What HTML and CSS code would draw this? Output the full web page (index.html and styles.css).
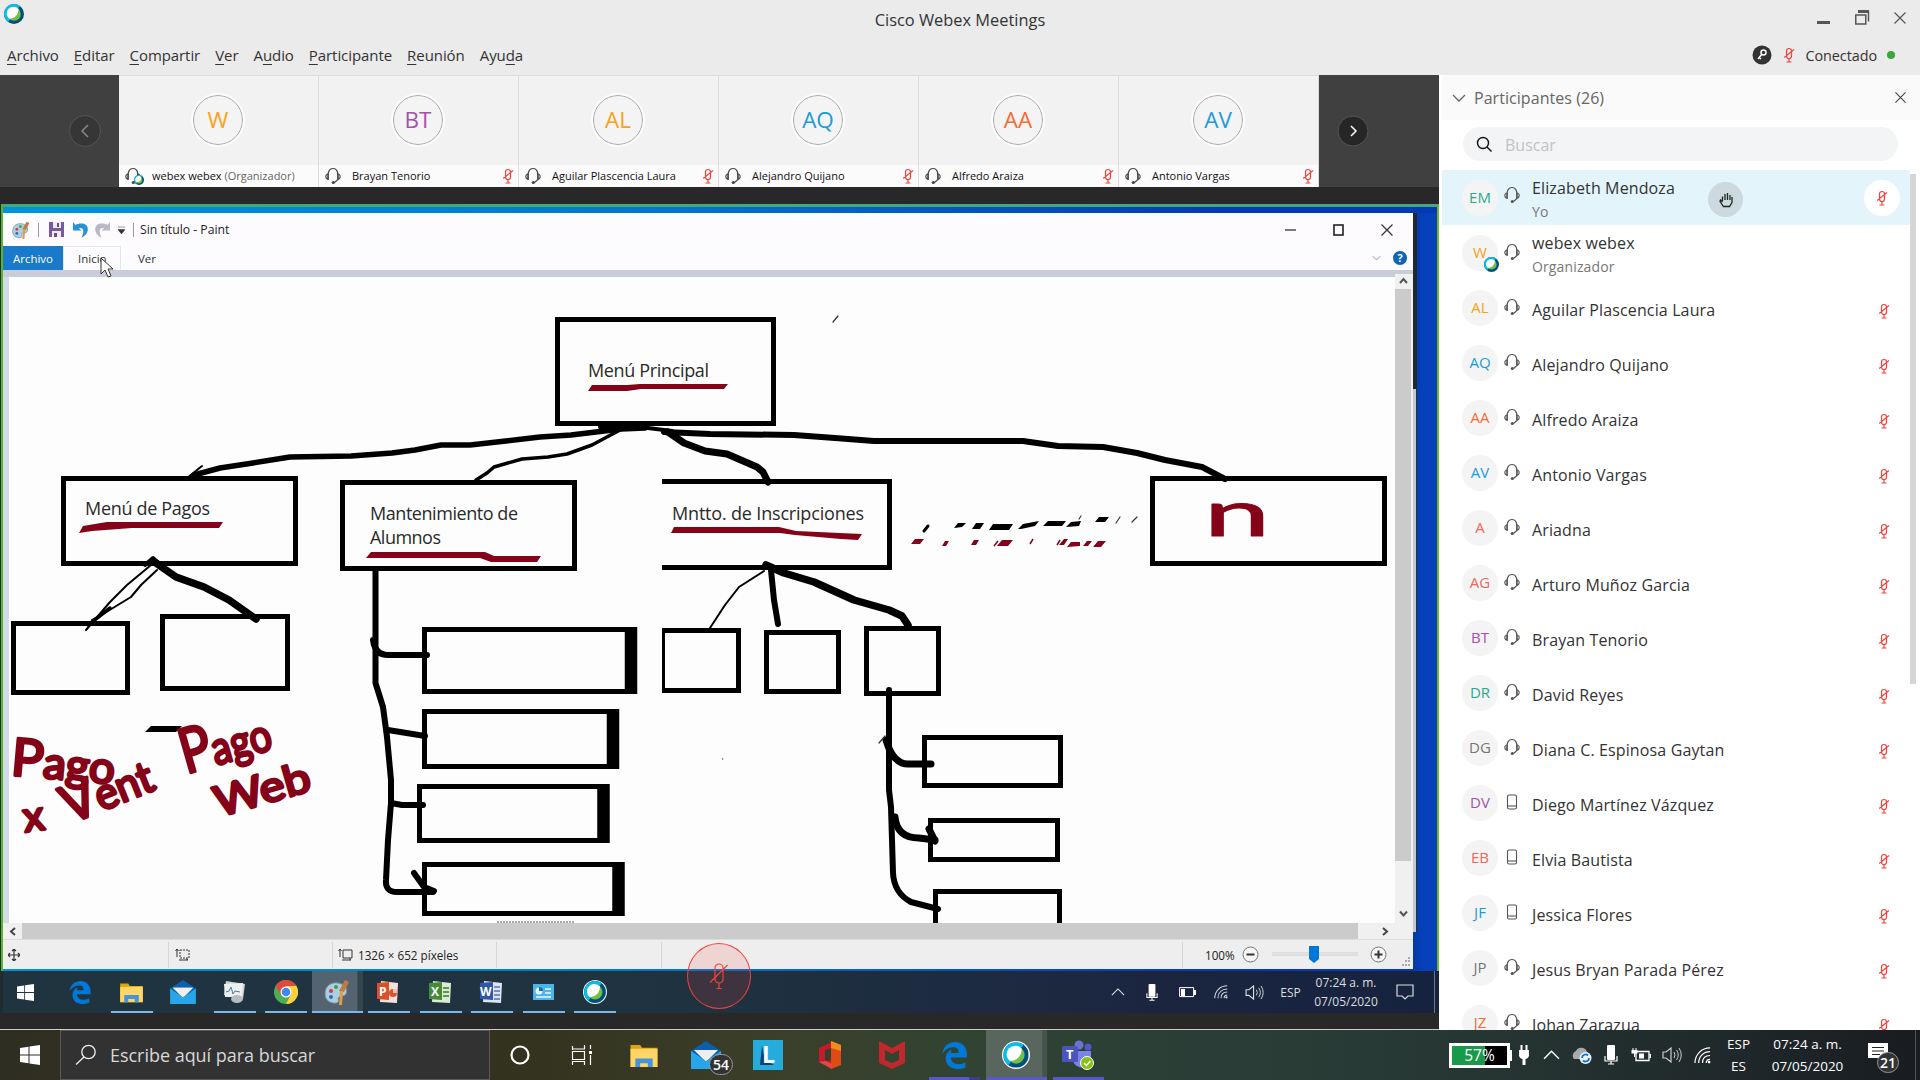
FILE: index.html
```html
<!DOCTYPE html>
<html lang="es">
<head>
<meta charset="utf-8">
<title>Cisco Webex Meetings</title>
<link rel="stylesheet" href="styles.css">
</head>
<body>
<svg class="defs" aria-hidden="true">
  <defs>
    <symbol id="headset" viewBox="0 0 16 18"><path d="M3 12.5C2.500 5 4 1.500 8 1.500S13.500 5 13 12.500L9.500 15.500" fill="none" stroke="currentColor" stroke-width="1.200"/><path d="M3.300 7C0 7.200 0 12 3.300 12.300ZM12.700 7c3.300.2 3.300 5 0 5.300Z" fill="none" stroke="currentColor" stroke-width="1.100"/><circle cx="8.300" cy="15.500" r="1.600" fill="currentColor"/></symbol>
    <symbol id="mute" viewBox="0 0 12 16"><path d="M3.500 4a2.500 2.500 0 0 1 5 0v5a2.500 2.500 0 0 1-5 0ZM1.200 10.500 11 2.500M6 12v3M3.500 15h5" fill="none" stroke="currentColor" stroke-width="1.200"/></symbol>
    <symbol id="phone" viewBox="0 0 12 16"><rect x="1.500" y="1" width="9" height="14" rx="1.500" fill="none" stroke="currentColor" stroke-width="1.100"/><path d="M2 12h8" stroke="currentColor" stroke-width="1.100"/></symbol>
    <symbol id="webex" viewBox="0 0 20 20"><circle cx="10" cy="10" r="10" fill="#00507a"/><path d="M4 18A10 10 0 1 1 16 2L10 10Z" fill="#07bdec"/><circle cx="10" cy="10" r="6.800" fill="#72bf44"/><path d="M14.500 4.900A6.800 6.800 0 1 0 5 14.600C11 14.500 14.600 10.500 14.500 4.900Z" fill="#fff"/></symbol>
    <symbol id="win" viewBox="0 0 20 20"><path d="M0 3 8.500 1.800V9.500H0ZM9.500 1.600 20 0V9.500H9.500ZM0 10.500H8.500V18.200L0 17ZM9.500 10.500H20V20L9.500 18.400Z" fill="#fff"/></symbol>
    <symbol id="edge" viewBox="0 0 24 26"><path d="M0 11.500C1.500 4 6.500 0 12.500 0 20 0 24 5 24 12.500V15H8.500C9 20 13 21.500 16.500 21.300 19 21.200 21 20.500 22.500 19.500V24.500C16 27.500 3.500 27 3.500 15.500 3.500 11.500 6 8.500 9.500 7 8.800 8.500 8.600 9.500 8.500 10.500H16C16 6.500 14 5 11 5 6 5 2.500 8 0 11.500Z" fill="#0078d7"/></symbol>
    <symbol id="folder" viewBox="0 0 28 26"><path d="M0 2h10l2 3h16v20H0Z" fill="#e0a30b"/><path d="M0 6h28v19H0Z" fill="#ffd567"/><path d="M5 25v-9h18v9h-5v-4h-8v4Z" fill="#4294dc"/></symbol>
    <symbol id="mail" viewBox="0 0 30 28"><path d="M0 10 15 0 30 10V27H0Z" fill="#0b5fae"/><path d="M3 9H27L15 21Z" fill="#f2f2f2"/><path d="M0 10 15 20 30 10V28H0Z" fill="#28a6ea"/><path d="M4 9H26L15 18.500Z" fill="#eee"/></symbol>
    <symbol id="palette" viewBox="0 0 26 26"><path d="M1 15C1 6 8 3 14 4c7 1 10 6 8 11-2 3-5 1-7 3s1 4-2 6C6 25 1 21 1 15Z" fill="#a9cfe2" stroke="#708da0"/><circle cx="7" cy="12" r="2" fill="#d34"/><circle cx="12" cy="8" r="2" fill="#4a9b42"/><circle cx="7" cy="18" r="2" fill="#3669bd"/><path d="m15 12 6-11 4 2-5 10Z" fill="#c07a43"/><path d="M16 12h3l-1 14h-3Z" fill="#e59a44"/></symbol>
    <symbol id="wifi" viewBox="0 0 18 18"><path d="M1 17C1 8 8 1 17 1M5 17C5 10 10 5 17 5M9 17c0-5 3-8 8-8M13 17c0-3 1-4 4-4" fill="none" stroke="currentColor" stroke-width="1.300"/><circle cx="16" cy="16" r="1.400" fill="currentColor"/></symbol>
    <symbol id="sound" viewBox="0 0 20 16"><path d="M1 5h3l5-4v14l-5-4H1Z" fill="none" stroke="currentColor" stroke-width="1.200"/><path d="M12 5q2 3 0 6M14.500 3q3.500 5 0 10M17 1q4.500 7 0 14" fill="none" stroke="currentColor"/></symbol>
    <symbol id="mic" viewBox="0 0 14 20"><rect x="3" y="0" width="8" height="15" rx="1" fill="#fff"/><path d="M1 11v5h12v-5M7 16v3M4 19h6" fill="none" stroke="#fff" stroke-width="1.200"/></symbol>
    <symbol id="up" viewBox="0 0 16 9"><path d="m1 8 7-7 7 7" fill="none" stroke="currentColor" stroke-width="1.300"/></symbol>
    <symbol id="x" viewBox="0 0 12 12"><path d="m.5.5 11 11M11.500.5l-11 11" stroke="currentColor" stroke-width="1.200"/></symbol>
    <symbol id="down" viewBox="0 0 14 8"><path d="m1 1 6 6 6-6" fill="none" stroke="currentColor" stroke-width="1.300"/></symbol>
  </defs>
</svg>

<header class="top">
  <div class="titlebar">
    <svg class="logo" width="20" height="20"><use href="#webex"/></svg>
    <h1>Cisco Webex Meetings</h1>
    <div class="winbtns">
      <svg width="13" height="14"><rect y="10" width="13" height="3" fill="#555"/></svg>
      <svg width="15" height="15"><path d="M3.500 1.500h10v10" fill="none" stroke="#555" stroke-width="1.500"/><path d="M3 1.500h11" stroke="#555" stroke-width="3"/><rect x=".75" y="5" width="10" height="9" fill="none" stroke="#555" stroke-width="1.500"/></svg>
      <svg width="12" height="12" class="grey"><use href="#x"/></svg>
    </div>
  </div>
  <div class="menubar">
    <nav><span><u>A</u>rchivo</span><span><u>E</u>ditar</span><span><u>C</u>ompartir</span><span><u>V</u>er</span><span>A<u>u</u>dio</span><span><u>P</u>articipante</span><span><u>R</u>eunión</span><span>Ayu<u>d</u>a</span></nav>
    <div class="status">
      <svg width="20" height="20"><circle cx="10" cy="10" r="9.500" fill="#333"/><circle cx="11.500" cy="7.500" r="2.500" fill="none" stroke="#fff" stroke-width="1.500"/><path d="m10 9-4 5M7 12.500l2 1.500" stroke="#fff" stroke-width="1.500"/></svg>
      <svg class="red" width="12" height="16"><use href="#mute"/></svg>
      <span>Conectado</span><i class="dot"></i>
    </div>
  </div>
</header>

<main>
  <section class="stage">
    <div class="strip">
      <div class="side left"><svg class="arrow dim" width="34" height="34"><circle cx="17" cy="17" r="15.500"/><path d="m20 11-6 6 6 6"/></svg></div>
      <div class="tile"><div class="face"><b class="c-or">W</b></div><div class="cap"><span class="hs"><svg width="16" height="18"><use href="#headset"/></svg><svg class="mini" width="10" height="10"><use href="#webex"/></svg></span><span class="nm">webex webex <em>(Organizador)</em></span></div></div>
      <div class="tile"><div class="face"><b class="c-pu">BT</b></div><div class="cap"><span class="hs"><svg width="16" height="18"><use href="#headset"/></svg></span><span class="nm">Brayan Tenorio</span><svg class="red" width="12" height="16"><use href="#mute"/></svg></div></div>
      <div class="tile"><div class="face"><b class="c-or">AL</b></div><div class="cap"><span class="hs"><svg width="16" height="18"><use href="#headset"/></svg></span><span class="nm">Aguilar Plascencia Laura</span><svg class="red" width="12" height="16"><use href="#mute"/></svg></div></div>
      <div class="tile"><div class="face"><b class="c-bl">AQ</b></div><div class="cap"><span class="hs"><svg width="16" height="18"><use href="#headset"/></svg></span><span class="nm">Alejandro Quijano</span><svg class="red" width="12" height="16"><use href="#mute"/></svg></div></div>
      <div class="tile"><div class="face"><b class="c-ve">AA</b></div><div class="cap"><span class="hs"><svg width="16" height="18"><use href="#headset"/></svg></span><span class="nm">Alfredo Araiza</span><svg class="red" width="12" height="16"><use href="#mute"/></svg></div></div>
      <div class="tile"><div class="face"><b class="c-bl">AV</b></div><div class="cap"><span class="hs"><svg width="16" height="18"><use href="#headset"/></svg></span><span class="nm">Antonio Vargas</span><svg class="red" width="12" height="16"><use href="#mute"/></svg></div></div>
      <div class="side right"><svg class="arrow" width="32" height="34"><circle cx="16" cy="17" r="15"/><path d="m14 12 5 5-5 5"/></svg></div>
    </div>

    <div class="share">
      <div class="desktop">
        <div class="paint">
          <div class="ptitle">
            <svg width="18" height="18"><use href="#palette"/></svg><i class="sep"></i>
            <svg class="save" width="15" height="15"><path d="M0 0h15v15H0Z" fill="#7a5a9e"/><path d="M4 0h8v6H4ZM3 9h9v6H3Z" fill="#eee"/><path d="M8 1h2v4H8ZM5 11h3v4H5Z" fill="#6d4b92"/></svg>
            <svg class="undo" width="15" height="16"><path d="M0 0v8.500h8.500L6 6.200c4-.8 6 2.300 2.500 9.300C17 12 17 1 8 1.500 6 1.500 4 2 2.500 3Z" fill="#2793d2"/></svg>
            <svg class="redo" width="15" height="16"><path d="M15 0v8.500H6.500L9 6.200c-4-.8-6 2.300-2.500 9.300C-2 12-2 1 7 1.500c2 0 4 .5 5.500 1.500Z" fill="#b9b9c6"/></svg>
            <svg class="drop" width="7" height="8"><path d="M0 1h7M0 3.500h7L3.500 8Z" fill="#333" stroke="#333" stroke-width=".5"/></svg><i class="sep s2"></i>
            <span>Sin título - Paint</span>
            <div class="pbtns"><svg width="12" height="12"><path d="M0 6h11" stroke="#333" stroke-width="1.300"/></svg><svg width="12" height="12"><rect x="1" y="1" width="9" height="10" fill="none" stroke="#222" stroke-width="1.600"/></svg><svg width="12" height="12"><use href="#x"/></svg></div>
          </div>
          <div class="ptabs"><span class="on">Archivo</span><span class="cur">Inicio</span><span>Ver</span>
            <div class="help"><svg width="9" height="6"><use href="#down"/></svg><b>?</b></div></div>
          <div class="pwork">
            <svg class="canvas" viewBox="9 277 1386 646" width="1386" height="646">
              <g class="box">
                <path d="M557.500 319.500h216v104h-216Z"/>
                <path d="M63.500 478.500h232v85h-232ZM342.500 482.500h232v86h-232ZM1152.500 478.500h232v85h-232Z"/>
                <path d="M662 481.500h227.500v86H662"/>
                <path d="M13.500 623.500h114v69h-114ZM162.500 616.500h125v72h-125ZM766.500 632.500h72v59h-72ZM866.500 628.500h72v65h-72Z"/>
                <path d="M662 630.500h76.500v60H662"/><path d="M663.500 630v61" stroke-width="3"/>
                <path d="M424.500 629.500h206v62h-206ZM424.500 711.500h188v55h-188ZM419.500 786.500h184v54h-184ZM424.500 864.500h194v49h-194Z"/>
                <path d="M924.500 737.500h136v48h-136ZM930.500 820.500h127v39h-127ZM935.500 925v-33.500h124V925"/>
              </g>
              <path d="M631 627v67M613 709v60M603.500 784v59M618.500 862v54" stroke="#000" stroke-width="12.500"/>
              <g class="ink">
                <path d="M645 428 621 429 596 432 571 435 540 437 506 441 470 445 441 445 415 450 392 453 351 456 290 457 253 463 220 468 194 475" stroke-width="5.500"/>
                <path d="m187 478 15-12" stroke-width="2"/>
                <path d="M620 430 592 445 567 454 548 457 522 459 494 467 487 473 476 480" stroke-width="3.500"/>
                <path d="M600 427 640 427 672 431" stroke-width="4"/>
                <path d="M668 432 684 443 705 451 727 454 757 467 763 472 768 482" stroke-width="7"/>
                <path d="M664 432 710 434 794 435 835 438 874 441 1023 441 1058 446 1103 447 1137 453 1165 460 1202 467 1225 479" stroke-width="6"/>
                <path d="M151 565 127 585 110 602 86 630M157 570 141 585 131 597 108 611 92 620" stroke-width="2"/>
                <path d="m110 608-22 17" stroke-width="3.500"/>
                <path d="M153 561 176 577 204 587 229 600 256 619" stroke-width="7.500"/>
                <path d="m145 565 8-7 8 7" stroke-width="4"/>
                <path d="M375.500 571V683L383 707 387 737 391 780 391 803 388 840 386 880Q385 892 397 892H433" stroke-width="6"/>
                <path d="m414 873 10 14 10 4M373 640q2 15 15 15h39M388 730l37 6M391 803l11 2h21" stroke-width="6"/>
                <path d="M764 571 739 587 725 605 710 628" stroke-width="2"/>
                <path d="M771 570 774 600 778 624" stroke-width="6"/>
                <path d="M766 565 784 573 814 582 854 600 889 610 902 616 908 625" stroke-width="7.500"/>
                <path d="M889 690V790L891 807 893 873Q894 893 911 902L938 909" stroke-width="6"/>
                <path d="M886 740Q893 764 908 764H931M895 817Q897 838 919 838L935 840M929 829l6 12" stroke-width="7"/>
                <path d="m879 743 6-7M833 322l5-6" stroke="#333" stroke-width="1.200"/>
                <path d="m924 531 4-5" stroke-width="3"/>
                <path d="m1116 523 4-6M1132 522l5-5M1079 519l2-3" stroke="#333" stroke-width="1.200"/>
                <circle cx="722.600" cy="759" r=".8" fill="#555" stroke="none"/>
              </g>
              <path d="m954 528 4-5h8l-4 4ZM972 529l4-6h8l-4 6ZM989 530l4-6h20l-4 6ZM1018 529l5-5 16-3-4 5-14 3ZM1043 526l5-5h18l-4 5ZM1066 527l5-5 10-1-2 5ZM1095 522l4-5h10l-4 5Z"/>
              <path d="m145 732 6-6h31l-6 6Z"/>
              <path d="M497 922h78" stroke="#555" stroke-dasharray="2 1"/>
              <g class="redink">
                <path d="m588 391 4-6h35l13-1h88l-4 5h-83l-14 2ZM79 533l4-7 24-4h116l-4 6H132l-40 3ZM366 558l5-6h114l9 4h47l-4 6h-46l-11-4ZM671 533l3-6h105l17 4 66 3-4 6-17-1-46-4-15-2Z" stroke="none"/>
                <path d="m911 544 4-5h9l-4 5ZM942 546l3-5h4l-3 5ZM971 545l3-5h5l-3 5ZM997 546l5-6h11l-5 6ZM1059 545l5-6h4l-4 6ZM1067 547l4-5h9v4ZM1083 546l4-5h5l-4 5ZM1093 547l5-6h8l-5 6Z" stroke="none"/>
                <path d="m994 546 4-5M1030 544l3-5M1057 545l3-5"/>
              </g>
              <g class="label">
                <text x="588" y="377" textLength="121">Menú Principal</text>
                <text x="85" y="515" textLength="125">Menú de Pagos</text>
                <text x="370" y="520" textLength="148">Mantenimiento de</text>
                <text x="370" y="544" textLength="71">Alumnos</text>
                <text x="672" y="520" textLength="192">Mntto. de Inscripciones</text>
              </g>
              <g class="hand">
                <text transform="translate(1204 536) scale(1.850 1)" font-size="64" class="fine">n</text>
                <text transform="translate(10 775) rotate(5)" font-size="44" textLength="104" lengthAdjust="spacingAndGlyphs"><tspan font-size="52">P</tspan>ago</text>
                <text transform="translate(25 832) rotate(-8)" font-size="42">x</text>
                <text transform="translate(70 824) rotate(-22)" font-size="44" textLength="94" lengthAdjust="spacingAndGlyphs"><tspan font-size="52">V</tspan>ent</text>
                <text transform="translate(186 774) rotate(-16)" font-size="46" textLength="92" lengthAdjust="spacingAndGlyphs"><tspan font-size="62">P</tspan>ago</text>
                <text transform="translate(219 817) rotate(-16)" font-size="42" textLength="98" lengthAdjust="spacingAndGlyphs">Web</text>
              </g>
            </svg>
            <div class="vbar"><svg width="9" height="8"><path d="m1 6 3.500-4L8 6" fill="none" stroke="#555" stroke-width="2"/></svg><i></i><svg width="9" height="8"><path d="m1 1.500 3.500 4L8 1.500" fill="none" stroke="#555" stroke-width="2"/></svg></div>
          </div>
          <div class="hbar"><svg width="8" height="9"><path d="M6 1 2 4.500 6 8" fill="none" stroke="#444" stroke-width="2"/></svg><i></i><svg width="8" height="9"><path d="m2 1 4 3.500L2 8" fill="none" stroke="#444" stroke-width="2"/></svg></div>
          <div class="pstat">
            <span class="cell c1"><svg width="12" height="12"><path d="M6 0v12M0 6h12M4 2l2-2 2 2M4 10l2 2 2-2M2 4 0 6l2 2M10 4l2 2-2 2" fill="none" stroke="#333" stroke-width="1.200"/></svg></span>
            <span class="cell c2"><svg width="15" height="13"><path d="M5 2h9v8H5Z" fill="none" stroke="#333" stroke-dasharray="2 1"/><path d="M2 9V1M.5 3 2 1l1.500 2M4 12h9M11 10.500l2 1.500" fill="none" stroke="#333"/></svg></span>
            <span class="cell c3"><svg width="15" height="13"><path d="M5 2h9v8H5ZM2 9V1M.5 3 2 1l1.500 2M4 12h9M11 10.500l2 1.500" fill="none" stroke="#333"/></svg>1326 × 652 píxeles</span>
            <span class="cell c4"></span><span class="cell c5"></span>
            <span class="zoomer">100%<svg class="zo" width="17" height="17"><circle cx="8.500" cy="8.500" r="7.500" fill="#f5f5f5" stroke="#777"/><path d="M4.500 8.500h8" stroke="#333" stroke-width="2"/></svg><svg width="90" height="18"><path d="M2 8h86" stroke="#ccc" stroke-width="3"/><path d="M2 8h86" stroke="#f4f4f4"/><path d="M39 0h10v13l-5 4-5-4Z" fill="#0078d7"/></svg><svg class="zi" width="17" height="17"><circle cx="8.500" cy="8.500" r="7.500" fill="#f5f5f5" stroke="#777"/><path d="M4.500 8.500h8M8.500 4.500v8" stroke="#333" stroke-width="2"/></svg></span>
            <svg class="grip" width="9" height="9"><path d="M7 1h2M4 4h2M7 4h2M1 8h2M4 8h2M7 8h2" stroke="#aaa" stroke-width="2"/></svg>
          </div>
        </div>
        <div class="wall"><i class="w1"></i><i class="w2"></i></div>
      </div>

      <div class="rtask">
        <div class="ric first"><svg width="17" height="17"><use href="#win"/></svg></div>
        <div class="ric"><svg width="22" height="23"><use href="#edge"/></svg></div>
        <div class="ric run"><svg width="23" height="21"><use href="#folder"/></svg></div>
        <div class="ric"><svg width="26" height="24"><use href="#mail"/></svg></div>
        <div class="ric run"><svg width="25" height="24"><path d="m4 1 19 3-2 15L2 15Z" fill="#cfd4d6"/><path d="m2 4 19-1-1 14H3Z" fill="#eef0f0"/><path d="m4 12 3-1 2-4 2 7 2-3 5 1" fill="none" stroke="#3a7fae"/><ellipse cx="15" cy="19" rx="6" ry="4" fill="#b7bcbe"/></svg></div>
        <div class="ric run"><svg width="24" height="24"><circle cx="12" cy="12" r="12" fill="#4caf50"/><path d="M12 12 1.600 6A12 12 0 0 1 22.400 6H12Z" fill="#dd4b3e"/><path d="M12 6H22.400A12 12 0 0 1 12 24L17 14Z" fill="#fdd23c"/><path d="M1.600 6 7 15 12 7Z" fill="#dd4b3e"/><circle cx="12" cy="12" r="5.500" fill="#fff"/><circle cx="12" cy="12" r="4.300" fill="#4285f4"/></svg></div>
        <div class="ric run act"><svg width="26" height="26"><use href="#palette"/></svg></div>
        <div class="ric run"><svg width="25" height="24"><path d="m5 1 17 2-1 20-17-1Z" fill="#f7e0d8"/><path d="m1 3 12-1v18L1 19Z" fill="#d9502c"/><text x="3" y="16" class="ot">P</text><circle cx="17" cy="13" r="4" fill="#d9552f"/><path d="M17 13V9a4 4 0 0 1 4 4Z" fill="#f7c9b8"/></svg></div>
        <div class="ric run"><svg width="25" height="24"><path d="m5 1 18 2-1 20-18-1Z" fill="#dcebd5"/><path d="m1 3 13-1v18L1 19Z" fill="#468b3b"/><text x="3" y="16" class="ot">X</text><path d="M15 8h6M15 12h6M15 16h6" stroke="#5b9a4d" stroke-width="2"/></svg></div>
        <div class="ric run"><svg width="25" height="24"><path d="m5 1 18 2-1 20-18-1Z" fill="#dfe5f5"/><path d="m1 3 13-1v18L1 19Z" fill="#3256a5"/><text x="1" y="16" class="ot">W</text><path d="M15 7h6M15 11h6M15 15h6M15 19h6" stroke="#5373b5" stroke-width="1.500"/></svg></div>
        <div class="ric run"><svg width="21" height="16"><path d="M0 0h21v16H0Z" fill="#4db4ea"/><circle cx="6" cy="7" r="3.500" fill="#e8f6fd"/><path d="M6 7V3a4 4 0 0 1 4 4Z" fill="#176fb0"/><path d="M12 5h6M12 9h6M3 13h15" stroke="#e8f6fd" stroke-width="1.500"/></svg></div>
        <div class="ric run"><svg width="24" height="24" viewBox="-1 -1 22 22"><circle cx="10" cy="10" r="11" fill="#e8f4f7"/><use href="#webex" width="20" height="20"/></svg></div>
        <div class="rtray">
          <svg width="14" height="8"><use href="#up"/></svg><svg width="14" height="17"><use href="#mic"/></svg><svg width="17" height="11"><path d="M.6.6h14v9h-14Z" fill="none" stroke="#fff"/><path d="M2 2h4v7H2ZM15 3h2v5h-2Z" fill="#fff"/></svg><svg width="14" height="14"><use href="#wifi"/></svg><svg width="19" height="15"><use href="#sound"/></svg><span class="esp">ESP</span><span class="clk">07:24 a. m.<br>07/05/2020</span><svg width="18" height="17"><path d="M1 1h16v11h-5l-3 3-3-3H1Z" fill="none" stroke="#ddd" stroke-width="1.200"/></svg><i></i>
        </div>
      </div>
      <svg class="cursor" width="14" height="21"><path d="M1 1v16l4-4 3 7 3-1-3-7h5Z" fill="#fff" stroke="#333"/></svg>
      <div class="mutebtn"><svg width="20" height="27" viewBox="0 0 20 27"><path d="M6 5a4 4 0 0 1 8 0v11a4 4 0 0 1-8 0ZM1 19.500 18.500 2M10 20v5.500M7.500 25.500h5" fill="none" stroke="currentColor" stroke-width="1.200"/></svg></div>
    </div>
  </section>

  <aside>
    <div class="ahead"><svg width="14" height="8"><use href="#down"/></svg><span>Participantes (26)</span><svg class="close" width="11" height="11"><use href="#x"/></svg></div>
    <div class="search"><svg width="17" height="17"><circle cx="7" cy="7" r="5.500" fill="none" stroke="#111" stroke-width="1.400"/><path d="m11 11 4.500 4.500" stroke="#111" stroke-width="1.400"/></svg><span>Buscar</span></div>
    <div class="list">
      <div class="row me two"><b class="c-gr">EM</b><svg class="dev hi" width="16" height="18"><use href="#headset"/></svg><p>Elizabeth Mendoza<small>Yo</small></p><div class="hand-up"><svg width="14" height="16"><path d="M3.500 9V4.500M6 8V2M8.500 8V1M11 8V3M3.500 10 1.500 8 1 9.500 4.500 14.500h6l2.500-4V5" fill="none" stroke="#222" stroke-width="1.300"/></svg></div><span class="mw"><svg class="red" width="12" height="16"><use href="#mute"/></svg></span></div>
      <div class="row two"><b class="c-or">W<svg class="mini2" width="15" height="15"><use href="#webex"/></svg></b><svg class="dev" width="16" height="18"><use href="#headset"/></svg><p>webex webex<small>Organizador</small></p></div>
      <div class="row"><b class="c-or">AL</b><svg class="dev" width="16" height="18"><use href="#headset"/></svg><p>Aguilar Plascencia Laura</p><svg class="red" width="12" height="16"><use href="#mute"/></svg></div>
      <div class="row"><b class="c-bl">AQ</b><svg class="dev" width="16" height="18"><use href="#headset"/></svg><p>Alejandro Quijano</p><svg class="red" width="12" height="16"><use href="#mute"/></svg></div>
      <div class="row"><b class="c-ve">AA</b><svg class="dev" width="16" height="18"><use href="#headset"/></svg><p>Alfredo Araiza</p><svg class="red" width="12" height="16"><use href="#mute"/></svg></div>
      <div class="row"><b class="c-bl">AV</b><svg class="dev" width="16" height="18"><use href="#headset"/></svg><p>Antonio Vargas</p><svg class="red" width="12" height="16"><use href="#mute"/></svg></div>
      <div class="row"><b class="c-re">A</b><svg class="dev" width="16" height="18"><use href="#headset"/></svg><p>Ariadna</p><svg class="red" width="12" height="16"><use href="#mute"/></svg></div>
      <div class="row"><b class="c-re">AG</b><svg class="dev" width="16" height="18"><use href="#headset"/></svg><p>Arturo Muñoz Garcia</p><svg class="red" width="12" height="16"><use href="#mute"/></svg></div>
      <div class="row"><b class="c-pu">BT</b><svg class="dev" width="16" height="18"><use href="#headset"/></svg><p>Brayan Tenorio</p><svg class="red" width="12" height="16"><use href="#mute"/></svg></div>
      <div class="row"><b class="c-gr">DR</b><svg class="dev" width="16" height="18"><use href="#headset"/></svg><p>David Reyes</p><svg class="red" width="12" height="16"><use href="#mute"/></svg></div>
      <div class="row"><b class="c-gy">DG</b><svg class="dev" width="16" height="18"><use href="#headset"/></svg><p>Diana C. Espinosa Gaytan</p><svg class="red" width="12" height="16"><use href="#mute"/></svg></div>
      <div class="row"><b class="c-pu">DV</b><svg class="dev" width="16" height="16"><use href="#phone"/></svg><p>Diego Martínez Vázquez</p><svg class="red" width="12" height="16"><use href="#mute"/></svg></div>
      <div class="row"><b class="c-re">EB</b><svg class="dev" width="16" height="16"><use href="#phone"/></svg><p>Elvia Bautista</p><svg class="red" width="12" height="16"><use href="#mute"/></svg></div>
      <div class="row"><b class="c-bl">JF</b><svg class="dev" width="16" height="16"><use href="#phone"/></svg><p>Jessica Flores</p><svg class="red" width="12" height="16"><use href="#mute"/></svg></div>
      <div class="row"><b class="c-gy">JP</b><svg class="dev" width="16" height="18"><use href="#headset"/></svg><p>Jesus Bryan Parada Pérez</p><svg class="red" width="12" height="16"><use href="#mute"/></svg></div>
      <div class="row"><b class="c-ve">JZ</b><svg class="dev" width="16" height="18"><use href="#headset"/></svg><p>Johan Zarazua</p><svg class="red" width="12" height="16"><use href="#mute"/></svg></div>
      <i class="thumb"></i>
    </div>
  </aside>
</main>

<footer>
  <div class="start"><svg width="20" height="20"><use href="#win"/></svg></div>
  <div class="find"><svg width="22" height="22"><circle cx="13.500" cy="8" r="6.700" fill="none" stroke="#eee" stroke-width="1.300"/><path d="M9 13 1 20.500" stroke="#eee" stroke-width="1.300"/></svg><span>Escribe aquí para buscar</span></div>
  <div class="apps">
    <div class="app"><svg width="20" height="20"><circle cx="10" cy="10" r="8.500" fill="none" stroke="#fff" stroke-width="2.200"/></svg></div>
    <div class="app"><svg width="22" height="20"><path d="M1.500 5v-4M1.500 4h12V0M1.500 6.500h12v8h-12ZM1.500 20v-3.500h12V20M19.500 0v4M19.500 10v10" fill="none" stroke="#fff" stroke-width="1.200"/><path d="M18 6h3v3h-3Z" fill="#fff"/></svg></div>
    <div class="app"><svg width="28" height="25"><use href="#folder"/></svg></div>
    <div class="app"><svg width="30" height="28"><use href="#mail"/></svg><em class="badge">54</em></div>
    <div class="app"><svg class="free" width="30" height="30"><path d="M0 0h30v30H0Z" fill="#25abdc"/><path d="m9 6-2 19 14 0-9-5Z" fill="#083c74"/><text x="9" y="23" class="lt">L</text></svg></div>
    <div class="app"><svg width="24" height="28"><path d="M1 7 14 1v6L7 9v11l8-1v9L1 21Z" fill="#c6192b"/><path d="m13 0 10 4v20l-10 4V0Z" fill="#e04a13"/><path d="m13 0 10 4v6l-10-3Z" fill="#f28b1b"/><path d="m1 21 7-1 6 3v5Z" fill="#e4473f"/></svg></div>
    <div class="app"><svg width="28" height="30"><path d="M1 1 14 8 27 1V23L14 29 1 23ZM7 10v10l7 3 7-3V10l-7 4Z" fill="#c1282d" fill-rule="evenodd"/></svg></div>
    <div class="app open split"><svg width="25" height="27"><use href="#edge"/></svg></div>
    <div class="app open active"><svg width="28" height="28" viewBox="-1 -1 22 22"><circle cx="10" cy="10" r="11" fill="#fff"/><use href="#webex" width="20" height="20"/></svg></div>
    <div class="app open"><svg width="32" height="30"><circle cx="17" cy="5" r="4.500" fill="#6d72d5"/><circle cx="26" cy="7" r="3.500" fill="#5059c9"/><path d="M11 11h18v12q-4 6-12 4-6-2-6-8Z" fill="#7b83eb"/><rect y="6" width="16" height="16" rx="1.500" fill="#4b53bc"/><text x="4" y="18.500" class="tt">T</text><circle cx="25" cy="23" r="6.500" fill="#8cbf16" stroke="#fff"/><path d="m22 23 2.500 2.500L28.500 21" fill="none" stroke="#fff" stroke-width="1.500"/></svg></div>
  </div>
  <div class="tray">
    <div class="batt"><span>57%</span></div>
    <svg width="12" height="20"><path d="M2.500 0h2v5h3V0h2v5H11v5q0 3-3.500 4v6h-3v-6Q1 13 1 10V5h1.500Z" fill="#fff"/></svg>
    <svg width="17" height="10"><use href="#up"/></svg>
    <svg width="21" height="18"><path d="M3 13a5 5 0 0 1 2-8 6 6 0 0 1 11 1q4 2 3 7Z" fill="#aaa"/><circle cx="14.500" cy="12" r="6" fill="#eaf3ff"/><path d="M11 12a3.500 3.500 0 0 1 6-2.500M18 12a3.500 3.500 0 0 1-6 2.500" fill="none" stroke="#0b6fd0" stroke-width="1.800"/></svg>
    <svg width="14" height="20"><use href="#mic"/></svg>
    <svg width="20" height="14"><path d="M5 3.500h13v9H5Z" fill="none" stroke="#fff" stroke-width="1.300"/><path d="M18.500 6h1.500v4h-1.500ZM8 5.500h5v5H8ZM.5 2h6v3.500h-6ZM1.500 0h1v2h-1ZM4.500 0h1v2h-1ZM3 5h1v4H3Z" fill="#fff"/></svg>
    <svg width="20" height="16" class="snd"><use href="#sound"/></svg>
    <svg width="17" height="17"><use href="#wifi"/></svg>
    <div class="t2">ESP<br>ES</div>
    <div class="t2 big">07:24 a. m.<br>07/05/2020</div>
    <div class="notif"><svg width="22" height="20"><path d="M0 0h20v15h-5v4l-4-4H0Z" fill="#fff"/><path d="M4 4.500h12M4 8h12M4 11.500h8" stroke="#222"/></svg><em class="badge">21</em></div>
    <i class="peek"></i>
  </div>
</footer>
</body>
</html>
```

FILE: styles.css
```css
* { box-sizing: border-box; }
body { margin: 0; width: 1920px; height: 1080px; overflow: hidden; display: flex; flex-direction: column; font-family: "Open Sans", "Noto Sans", sans-serif; color: #333; background: #ebebeb; }
svg { display: block; flex: none; }
em { font-style: normal; }
.defs { position: absolute; width: 0; height: 0; }
.free { overflow: visible; }

.top { height: 75px; flex: none; background: #ebebeb; }
.titlebar { height: 38px; display: grid; grid-template-columns: 200px 1fr 200px; align-items: center; }
.logo { margin: -10px 0 0 4px; }
.titlebar h1 { margin: 0; font-weight: 400; font-size: 16.400px; text-align: center; }
.winbtns { display: flex; justify-content: flex-end; align-items: center; gap: 25px; padding: 0 14px 3px 0; color: #555; }
.winbtns svg:last-child { margin-left: -1px; }
.menubar { height: 37px; display: flex; justify-content: space-between; align-items: center; padding: 0 25px 3px 7px; font-size: 15px; letter-spacing: -.07px; }
.menubar nav { display: flex; gap: 15px; }
.menubar u { text-underline-offset: 3px; text-decoration-thickness: 1px; }
.status { display: flex; align-items: center; gap: 10px; font-size: 14.400px; }
.status .red { margin: 0 1px; }
.dot { width: 8px; height: 8px; border-radius: 50%; background: #3aa83a; }
.red { color: #f0443c; }

main { height: 955px; flex: none; display: flex; background: #fff; }
.stage { width: 1439px; height: 955px; background: #282828; border-bottom: 1px solid #ccc; margin-right: 3px; }
.strip { display: flex; height: 112px; background: #404040; }
.side { width: 119px; padding-top: 39px; }
.side.left { padding-left: 68px; }
.side.right { width: 120px; padding-left: 18px; }
.arrow circle { fill: #262626; stroke: #555; }
.arrow path { fill: none; stroke: #fff; stroke-width: 1.500; }
.arrow.dim circle { fill: #363636; }
.arrow.dim path { stroke: #888; }
.tile { width: 200px; background: #f2f2f2; border-right: 1px solid #dcdcdc; border-top: 1px solid #ddd; display: flex; flex-direction: column; }
.face { height: 89px; display: flex; justify-content: center; align-items: center; padding: 0 1px 2px 0; }
.face b { width: 50px; height: 50px; border-radius: 50%; border: 1px solid #a5a5a5; outline: 2px solid #fbfbfb; background: #f4f4f4; font-weight: 400; font-size: 22.500px; line-height: 47px; text-align: center; }
.cap { height: 22px; background: #fbfbfb; display: flex; align-items: center; padding: 0 5px 1px 6px; color: #111; font-size: 11px; font-weight: 500; }
.cap .red { margin-right: -1px; }
.hs { width: 27px; position: relative; color: #444; margin-left: 0; }
.mini { position: absolute; left: 9px; top: 8px; }
.nm { flex: 1; }
.nm em { color: #666; font-weight: 400; }
.c-or { color: #f7a21b; } .c-pu { color: #a553a8; } .c-bl { color: #1c9bdc; } .c-ve { color: #f76a33; } .c-re { color: #f2655a; } .c-gr { color: #2aaa8c; } .c-gy { color: #777; }

.share { margin: 17px 0 0 1px; width: 1438px; height: 809px; position: relative; }
.desktop { height: 767px; display: flex; border-top: 3px solid #46a77c; border-left: 2px solid #55b82a; border-right: 2px solid #74bc18; padding-top: 6px; background: linear-gradient(90deg, #0094dc, #0077cc 45%, #0539b3 85%); }
.paint { width: 1410px; height: 756px; background: #fcfbfe; flex: none; }
.ptitle { height: 33px; display: flex; align-items: center; padding: 0 15px 0 9px; font-size: 12.200px; color: #222; background: linear-gradient(#f6feff, #fdfbfe 25%); }
.sep { width: 1px; height: 14px; background: #999; margin: 0 10px 0 8px; }
.undo { margin-left: 9px; } .redo { margin-left: 7px; } .drop { margin-left: 8px; }
.sep.s2 { margin: 0 6px 0 8px; }
.pbtns { margin-left: auto; display: flex; gap: 36px; padding-right: 5px; color: #333; }
.ptabs { height: 24px; display: flex; font-size: 11.500px; line-height: 25px; }
.ptabs span { padding: 0 0 0 24px; }
.ptabs .on { width: 60px; padding: 0; text-align: center; background: #1979ca; color: #fff; }
.ptabs .cur { width: 58px; padding: 0 0 0 14px; border: 1px solid #e6e6ee; border-bottom: 0; line-height: 23px; margin-right: -7px; }
.help { margin-left: auto; display: flex; align-items: center; gap: 12px; padding-right: 6px; color: #888; }
.help b { width: 14px; height: 14px; border-radius: 50%; background: #0b66b4; color: #fff; font-size: 11px; line-height: 14px; text-align: center; }
.pwork { height: 653px; display: flex; padding-left: 6px; background: #d4dbe8; border-top: 7px solid #c8cdd9; }
.canvas { background: #fdfdfd; }
.vbar { width: 18px; margin-top: -3px; background: #f0f0f0; display: flex; flex-direction: column; align-items: center; padding: 3px 2px 5px 0; }
.vbar i { width: 16px; height: 572px; background: #cbcbcb; margin: 4px 0 auto; }
.hbar { height: 17px; background: #f0f0f0; display: flex; align-items: center; padding: 0 24px 0 6px; border-bottom: 1px solid #ddd; }
.hbar i { width: 1336px; height: 16px; background: #cbcbcb; margin: 0 auto 0 5px; }
.pstat { height: 29px; background: #eee; display: flex; align-items: center; font-size: 11.700px; color: #222; }
.cell { height: 26px; border-right: 1px solid #d5d5d5; display: flex; align-items: center; gap: 5px; }
.c1 { width: 166px; padding-left: 5px; } .c2 { width: 164px; padding-left: 6px; } .c3 { width: 164px; padding-left: 5px; white-space: nowrap; } .c4 { width: 165px; } .c5 { width: 521px; }
.zoomer { margin-left: 22px; display: flex; align-items: center; }
.zo { margin: 0 11px 0 7px; } .zi { margin-left: 10px; }
.grip { margin: 14px 3px 0 auto; }
.wall { flex: 1; background: linear-gradient(90deg, #0539a5, #0640bb 40%); }
.wall i { display: block; width: 4px; }
.w1 { height: 176px; background: #24262f; }
.w2 { height: 543px; background: #c5c9cd; border-right: 1px solid #234; }
.rtask { height: 42px; background: linear-gradient(90deg, #203440, #1f3240 50%, #1b2540 80%, #16233f); display: flex; border-left: 2px solid #1c2c35; }
.ric { width: 51.500px; display: flex; align-items: center; justify-content: center; position: relative; }
.ric.first { width: 51px; padding-right: 6px; }
.ric.run::after { content: ""; position: absolute; bottom: 0; left: 5px; width: 42px; height: 2px; background: #76b9ed; }
.ric.act { background: linear-gradient(90deg, #536470 88%, #33464f 90%); }
.ric.act::after { left: 0; width: 51px; }
.ot { font: bold 12px "Open Sans", sans-serif; fill: #fff; }
.rtray { margin-left: auto; display: grid; grid-template-columns: 32px 36px 34px 34px 32px 41px 70px 48px 10px; justify-items: center; align-items: center; color: #ddd; font-size: 12px; }
.rtray i { width: 1px; height: 42px; background: #6f7686; }
.clk { text-align: center; line-height: 19px; white-space: nowrap; }
.cursor { position: absolute; left: 99px; top: 53px; }
.mutebtn { position: absolute; left: 686px; top: 739px; width: 64px; height: 66px; border-radius: 50%; border: 1px solid #f0443c; background: rgba(240, 68, 60, .15); color: #f0443c; display: flex; align-items: center; justify-content: center; }

.box { fill: #fdfdfd; stroke: #000; stroke-width: 5; }
.ink { fill: none; stroke: #000; stroke-linejoin: round; stroke-linecap: round; }
.redink { fill: #850318; stroke: #850318; stroke-width: 1.500; }
.label { font-size: 18px; fill: #2a2a2a; }
.hand { font-family: Lato, "Open Sans", sans-serif; font-weight: 400; fill: #850318; stroke: #850318; stroke-width: 3; stroke-linejoin: round; }
.hand .fine { stroke-width: 1; }

aside { width: 478px; display: flex; flex-direction: column; }
.ahead { height: 45px; flex: none; background: #fafafa; display: flex; align-items: center; padding: 0 14px 0 10px; color: #666; font-size: 16px; letter-spacing: .05px; }
.ahead span { margin-left: 8px; }
.close { margin-left: auto; color: #444; }
.search { height: 34px; flex: none; margin: 7px 22px 9px 21px; border-radius: 17px; background: #f3f4f6; display: flex; align-items: center; padding: 1px 0 0 13px; gap: 12px; color: #c2c3c5; font-size: 16px; }
.list { height: 860px; overflow: hidden; position: relative; }
.row { height: 55px; width: 468px; display: flex; align-items: center; padding: 0 20px 0 20px; }
.row b { width: 36px; height: 36px; flex: none; border-radius: 50%; background: #f4f4f4; font-weight: 400; font-size: 15px; line-height: 34px; text-align: center; position: relative; }
.mini2 { position: absolute; right: -1px; bottom: -1px; }
.dev { margin: -2px 0 0 6px; color: #555; }
.dev.hi { margin-top: -6px; }
.row p { margin: 5px auto 0 12px; font-size: 16px; line-height: 22px; letter-spacing: .13px; white-space: nowrap; }
.row.two p { margin-top: 7px; }
.row small { display: block; font-size: 14px; line-height: 26px; color: #777; }
.row > .red { margin-top: 7px; }
.me { background: #e4f4fb; padding-right: 10px; }
.hand-up { width: 35px; height: 35px; border-radius: 50%; background: #ccd9de; display: flex; align-items: center; justify-content: center; margin: 4px 121px 0 0; }
.mw { width: 36px; height: 36px; border-radius: 50%; background: #fff; display: flex; align-items: center; justify-content: center; }
.thumb { position: absolute; right: 4px; top: 4px; width: 6px; height: 510px; background: #d6d6d6; }

footer { height: 50px; flex: none; display: flex; background: linear-gradient(90deg, #2f2e22, #34331f 28%, #3b3f2a 40%, #314332 50%, #2b3f37 60%, #273834 75%, #1f282a 90%, #191c21); color: #fff; }
.start { width: 60px; display: flex; align-items: center; justify-content: center; }
.find { width: 430px; background: #323232; border: 1px solid #5a5a5a; display: flex; align-items: center; padding-left: 14px; gap: 13px; font-size: 18px; letter-spacing: -.03px; color: #d8d8d8; }
.apps { display: flex; margin-left: -1px; }
.app { width: 62px; display: flex; align-items: center; justify-content: center; position: relative; }
.app.open::after { content: ""; position: absolute; left: 6px; bottom: 0; width: 51px; height: 3px; background: #5b57c4; }
.app.split::after { background: linear-gradient(90deg, #5b57c4 78%, #403d88 80%); }
.app.active { background: linear-gradient(90deg, transparent 1px, #58665e 1px 92%, #45534c 93%); }
.app.active::after { left: 1px; width: 61px; }
.badge { position: absolute; left: 34px; top: 24px; width: 24px; height: 21px; border-radius: 11px; border: 1px solid #999; background: #333; font-size: 14px; font-weight: 600; line-height: 19px; text-align: center; }
.lt { font: bold 23px "Open Sans", sans-serif; fill: #fff; }
.tt { font: bold 13px "Open Sans", sans-serif; fill: #fff; }
.tray { margin-left: auto; display: grid; grid-template-columns: 65px 24px 30px 30px 29px 32px 30px 31px 41px 97px 49px 15px; justify-items: center; align-items: center; color: #fff; }
.batt { width: 61px; height: 25px; border: 3px solid #fff; background: linear-gradient(90deg, #189a4a 60%, #000 60%); font-size: 15.500px; line-height: 18px; text-align: center; position: relative; }
.batt::after { content: ""; position: absolute; right: -5px; top: 4px; width: 2px; height: 11px; background: #fff; }
.snd { color: #ccc; }
.t2 { font-size: 13.500px; line-height: 22px; text-align: center; white-space: nowrap; }
.notif { position: relative; width: 30px; height: 24px; margin-left: 5px; }
.notif .badge { left: 9px; top: 9px; width: 22px; }
.peek { width: 1px; height: 50px; background: #555; margin-left: 5px; }
```
